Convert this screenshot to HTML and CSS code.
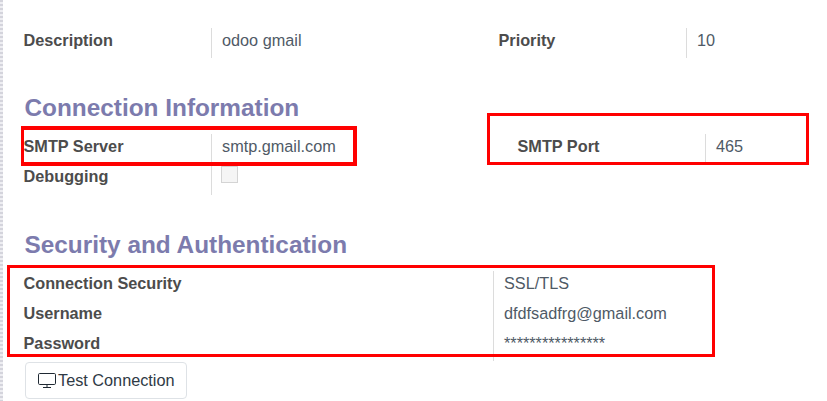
FILE: index.html
```html
<!DOCTYPE html>
<html lang="en">
<head>
<meta charset="utf-8">
<title>Outgoing Mail Server</title>
<link rel="stylesheet" href="styles.css">
</head>
<body>
<div class="edge"></div>
<main class="sheet">
  <section class="columns top">
    <div class="col-left">
      <div class="field tall"><div class="label">Description</div><div class="value">odoo gmail</div></div>
    </div>
    <div class="col-right">
      <div class="field tall"><div class="label">Priority</div><div class="value">10</div></div>
    </div>
  </section>

  <h2 class="heading first">Connection Information</h2>
  <section class="columns">
    <div class="col-left">
      <div class="field"><div class="label">SMTP Server</div><div class="value">smtp.gmail.com</div></div>
      <div class="field"><div class="label">Debugging</div><div class="value"><span class="checkbox"></span></div></div>
    </div>
    <div class="col-right indented">
      <div class="field"><div class="label">SMTP Port</div><div class="value">465</div></div>
    </div>
  </section>

  <h2 class="heading second">Security and Authentication</h2>
  <section class="wide">
    <div class="field"><div class="label">Connection Security</div><div class="value">SSL/TLS</div></div>
    <div class="field"><div class="label">Username</div><div class="value">dfdfsadfrg@gmail.com</div></div>
    <div class="field"><div class="label">Password</div><div class="value stars">****************</div></div>
  </section>

  <button class="test-btn" type="button">
    <svg class="monitor" width="18" height="15" viewBox="0 0 18 15" aria-hidden="true">
      <rect x="0.5" y="0.5" width="17" height="11" rx="1.2" fill="none" stroke="#1f2933" stroke-width="1"/>
      <path d="M9 12v2M5 14.5h8" fill="none" stroke="#1f2933" stroke-width="1"/>
    </svg><span>Test Connection</span>
  </button>
</main>
<div class="mark mark-server"></div>
<div class="mark mark-port"></div>
<div class="mark mark-security"></div>
</body>
</html>
```

FILE: styles.css
```css
* { box-sizing: border-box; }
html, body { margin: 0; height: 401px; overflow: hidden; background: #fff; }
body {
  display: flex;
  font-family: "Liberation Sans", Arial, sans-serif;
  font-size: 16.25px;
  color: #4c4c4c;
  position: relative;
}
.edge {
  width: 3px;
  flex: none;
  background: repeating-linear-gradient(#d4d4dc 0 2px, #eeeef2 2px 4px);
}
.sheet { flex: 1; padding: 28px 0 0 20px; }
.columns { display: flex; }
.col-left { width: 475px; flex: none; }
.indented { padding-left: 19px; }
.field { display: flex; height: 30px; }
.tall { height: 30px; }
.label { width: 188px; flex: none; padding-left: 0.5px; font-weight: 700; line-height: 25px; }
.value { border-left: 1px solid #dcdcdc; padding-left: 10px; line-height: 25px; color: #4f5a66; }
.col-left .field + .field { height: 31px; }
.heading {
  margin: 0 0 0 1.5px;
  font-size: 24.375px;
  line-height: 30px;
  font-weight: 700;
  color: #7c7bad;
}
.first { padding-top: 35px; height: 76px; }
.second { padding-top: 35px; height: 76px; }
.wide .label { width: 470px; }
.wide .field { height: 30px; }
.stars { line-height: 25px; }
.checkbox {
  display: block;
  width: 17px;
  height: 17px;
  margin: 2px 0 0 -1px;
  background: #f5f5f5;
  border: 1px solid #d4d4d4;
}
.test-btn {
  display: flex;
  align-items: center;
  margin: 1px 0 0 2px;
  width: 162px;
  height: 37px;
  padding: 0 0 0 12px;
  font: inherit;
  color: #2f3a45;
  background: #fff;
  border: 1px solid #dee2e6;
  border-radius: 4px;
}
.monitor { flex: none; margin-right: 2px; }
.mark { position: absolute; border: 3px solid #ff0000; }
.mark-server { left: 21px; top: 126px; width: 336px; height: 40px; border-width: 4px 4px 4px 3px; }
.mark-port { left: 487px; top: 113px; width: 322px; height: 52px; }
.mark-security { left: 7px; top: 265px; width: 708px; height: 92px; }
```
